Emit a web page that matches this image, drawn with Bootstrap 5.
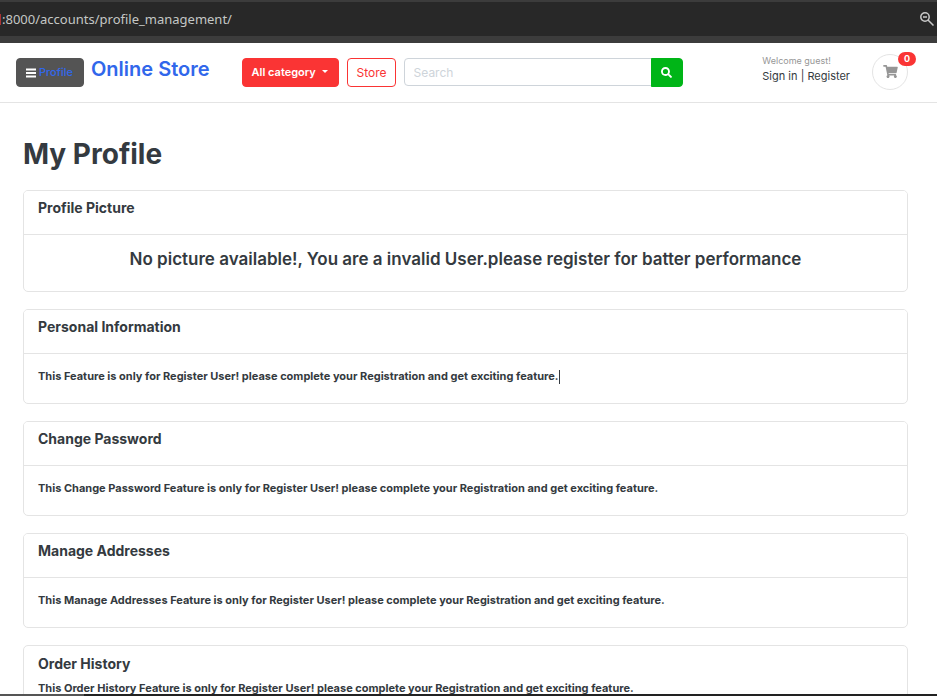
<!DOCTYPE html>
<html lang="en">
<head>
<meta charset="utf-8">
<meta name="viewport" content="width=device-width, initial-scale=1">
<title>My Profile</title>
<link href="https://cdn.jsdelivr.net/npm/bootstrap@5.3.0/dist/css/bootstrap.min.css" rel="stylesheet">
<style>
body{font-family:Inter,"Liberation Sans",sans-serif;font-size:12px;line-height:18px;color:#343a40;background:#fff}
.address-bar{height:43px;background:#282828;border-top:2px solid #3c3c3c;border-bottom:7px solid #3c3c3c;color:#c4c7c5;font:13px/34px "Noto Sans",sans-serif}
.address-bar .port-edge{width:1px;height:11px;background:#a33;margin-right:1px}
.address-bar button{color:#c8c8c8;line-height:0;margin-right:3px}
.page-view{min-height:0}
.task-edge{height:2px;background:#222}
.task-edge div{background:#555;width:9%}
.site-header{height:60px;border-bottom:1px solid #e4e4e4;padding:0 21px 0 16px}
.site-header .btn{font-size:12px;line-height:17px;padding:5px 9px;border-radius:4px}
.site-header .btn-profile{--bs-btn-bg:#545454;--bs-btn-border-color:#545454;--bs-btn-hover-bg:#444;color:#3167eb;width:68px;font-size:11px;font-weight:500}
.btn-profile svg{color:#fff;margin-right:3px}
.brand{font-size:20px;line-height:24px;font-weight:600;color:#3167eb;margin:0 32px 8px 7px}
.site-header .btn-category{--bs-btn-bg:#fa3434;--bs-btn-border-color:#fa3434;--bs-btn-color:#fff;--bs-btn-hover-bg:#e22;--bs-btn-hover-color:#fff;font-weight:600;font-size:11px;width:97px;text-align:left}
.btn-category::after{margin-left:6px;border-width:3px 3px 0;vertical-align:3px}
.btn-store{--bs-btn-border-color:#fa3434;--bs-btn-color:#fa3434;--bs-btn-hover-bg:#fa3434;--bs-btn-hover-color:#fff;width:49px}
.search-box{width:279px}
.search-box .form-control{font-size:12px;line-height:16px;min-height:28px;height:28px;padding:5px 9px;border-color:#ced4da;border-radius:4px}
.search-box .form-control::placeholder{color:#ced4da}
.btn-search{--bs-btn-bg:#00b517;--bs-btn-border-color:#00b517;--bs-btn-color:#fff;--bs-btn-hover-bg:#090;width:32px;height:29px}
.welcome{font-size:11px;line-height:16px;margin:0 22px 8px 0}
.welcome small{font-size:9px;line-height:14px;color:#969696}
.welcome a{color:#343a40}
.cart{width:36px;height:36px;border:1px solid #e4e4e4;color:#969696;margin:0 8px 2px 0}
.cart .badge{top:-3px;right:-9px;font-size:9px;line-height:10px;padding:2px 6px;background:#fa3434}
.profile-page{padding:31px 29px 0 23px}
.profile-page h1{font-size:28px;line-height:40px;font-weight:700;margin-bottom:16px}
.profile-page .card{--bs-card-border-color:#e4e4e4;--bs-card-border-radius:5px;--bs-card-inner-border-radius:4px;color:#343a40;margin-bottom:17px}
.profile-page .card-header{background:#fff;padding:6px 14px 16px;border-color:#e4e4e4}
.card-header h2{font-size:14px;line-height:21px;font-weight:700;margin:0}
.card-body h3{font-size:17px;line-height:20px;font-weight:600;margin:0 0 8px}
.profile-page .card-body{padding:14px}
.card-body p,.history-note{font-size:11px;line-height:16px;font-weight:700;margin:0 0 5px}
.caret{display:inline-block;width:1px;height:14px;background:#343a40;vertical-align:middle}
.history{padding:7px 14px 15px}
.history h2{font-size:14px;line-height:21px;font-weight:700;margin:0 0 6px}
</style>
<script src="https://cdn.jsdelivr.net/npm/bootstrap@5.3.0/dist/js/bootstrap.bundle.min.js"></script>
</head>
<body>
<div class="vh-100 d-flex flex-column overflow-hidden">
  <div class="address-bar d-flex align-items-center justify-content-between flex-shrink-0">
    <div class="d-flex align-items-center"><span class="port-edge"></span><span>:8000/accounts/profile_management/</span></div>
    <button type="button" class="btn border-0 p-0" aria-label="Zoom"><svg width="14" height="14" viewBox="0 0 14 14" fill="none" stroke="currentColor" stroke-width="1.5"><circle cx="5" cy="5" r="4.2"/><path d="M3 5h4M8 8l5.5 5.5"/></svg></button>
  </div>
  <div class="page-view flex-grow-1 overflow-hidden">
    <header class="site-header d-flex align-items-center">
      <button type="button" class="btn btn-profile text-nowrap d-flex align-items-center"><svg width="10" height="10" viewBox="0 0 10 10" fill="currentColor" class="flex-shrink-0"><path d="M0 .5h10v2H0zM0 4h10v2H0zM0 7.5h10v2H0z"/></svg>Profile</button>
      <a href="#" class="brand text-decoration-none text-nowrap">Online Store</a>
      <button type="button" class="btn btn-category dropdown-toggle text-nowrap me-2">All category</button>
      <a href="#" class="btn btn-store me-2">Store</a>
      <form class="search-box input-group flex-nowrap align-items-start">
        <input type="text" class="form-control" placeholder="Search" aria-label="Search">
        <button type="button" class="btn btn-search d-flex align-items-center justify-content-center" aria-label="Submit search"><svg width="11" height="11" viewBox="0 0 512 512" fill="currentColor"><path d="M505 443 405 343c-4-4-10-7-17-7h-16c28-36 44-80 44-128C416 93 323 0 208 0S0 93 0 208s93 208 208 208c48 0 92-16 128-44v16c0 7 3 13 7 17l100 100c9 9 24 9 34 0l28-28c9-10 9-25 0-34zM208 328a120 120 0 1 1 0-240 120 120 0 0 1 0 240z"/></svg></button>
      </form>
      <div class="welcome ms-auto text-nowrap"><small class="d-block">Welcome guest!</small><a href="#" class="text-decoration-none">Sign in</a> | <a href="#" class="text-decoration-none">Register</a></div>
      <a href="#" class="cart rounded-circle position-relative d-flex align-items-center justify-content-center" aria-label="Cart"><svg width="15" height="13" viewBox="0 0 576 512" fill="currentColor"><path d="M528 301 575 93c4-15-8-29-23-29H159l-9-45C148 8 138 0 126 0H24C11 0 0 11 0 24v16c0 13 11 24 24 24h70l70 343a56 56 0 1 0 67 9h210a56 56 0 1 0 64-10l5-25c4-15-8-29-23-29H218l-7-32h294c11 0 20-8 23-19z"/></svg><span class="badge rounded-pill position-absolute">0</span></a>
    </header>
    <main class="profile-page">
      <h1>My Profile</h1>
      <section class="card"><div class="card-header"><h2>Profile Picture</h2></div><div class="card-body text-center"><h3>No picture available!, You are a invalid User.please register for batter performance</h3></div></section>
      <section class="card"><div class="card-header"><h2>Personal Information</h2></div><div class="card-body"><p>This Feature is only for Register User! please complete your Registration and get exciting feature.<span class="caret"></span></p></div></section>
      <section class="card"><div class="card-header"><h2>Change Password</h2></div><div class="card-body"><p>This Change Password Feature is only for Register User! please complete your Registration and get exciting feature.</p></div></section>
      <section class="card"><div class="card-header"><h2>Manage Addresses</h2></div><div class="card-body"><p>This Manage Addresses Feature is only for Register User! please complete your Registration and get exciting feature.</p></div></section>
      <section class="card history"><h2>Order History</h2><p class="history-note">This Order History Feature is only for Register User! please complete your Registration and get exciting feature.</p></section>
    </main>
  </div>
  <div class="task-edge d-flex flex-shrink-0"><div></div></div>
</div>
</body>
</html>
